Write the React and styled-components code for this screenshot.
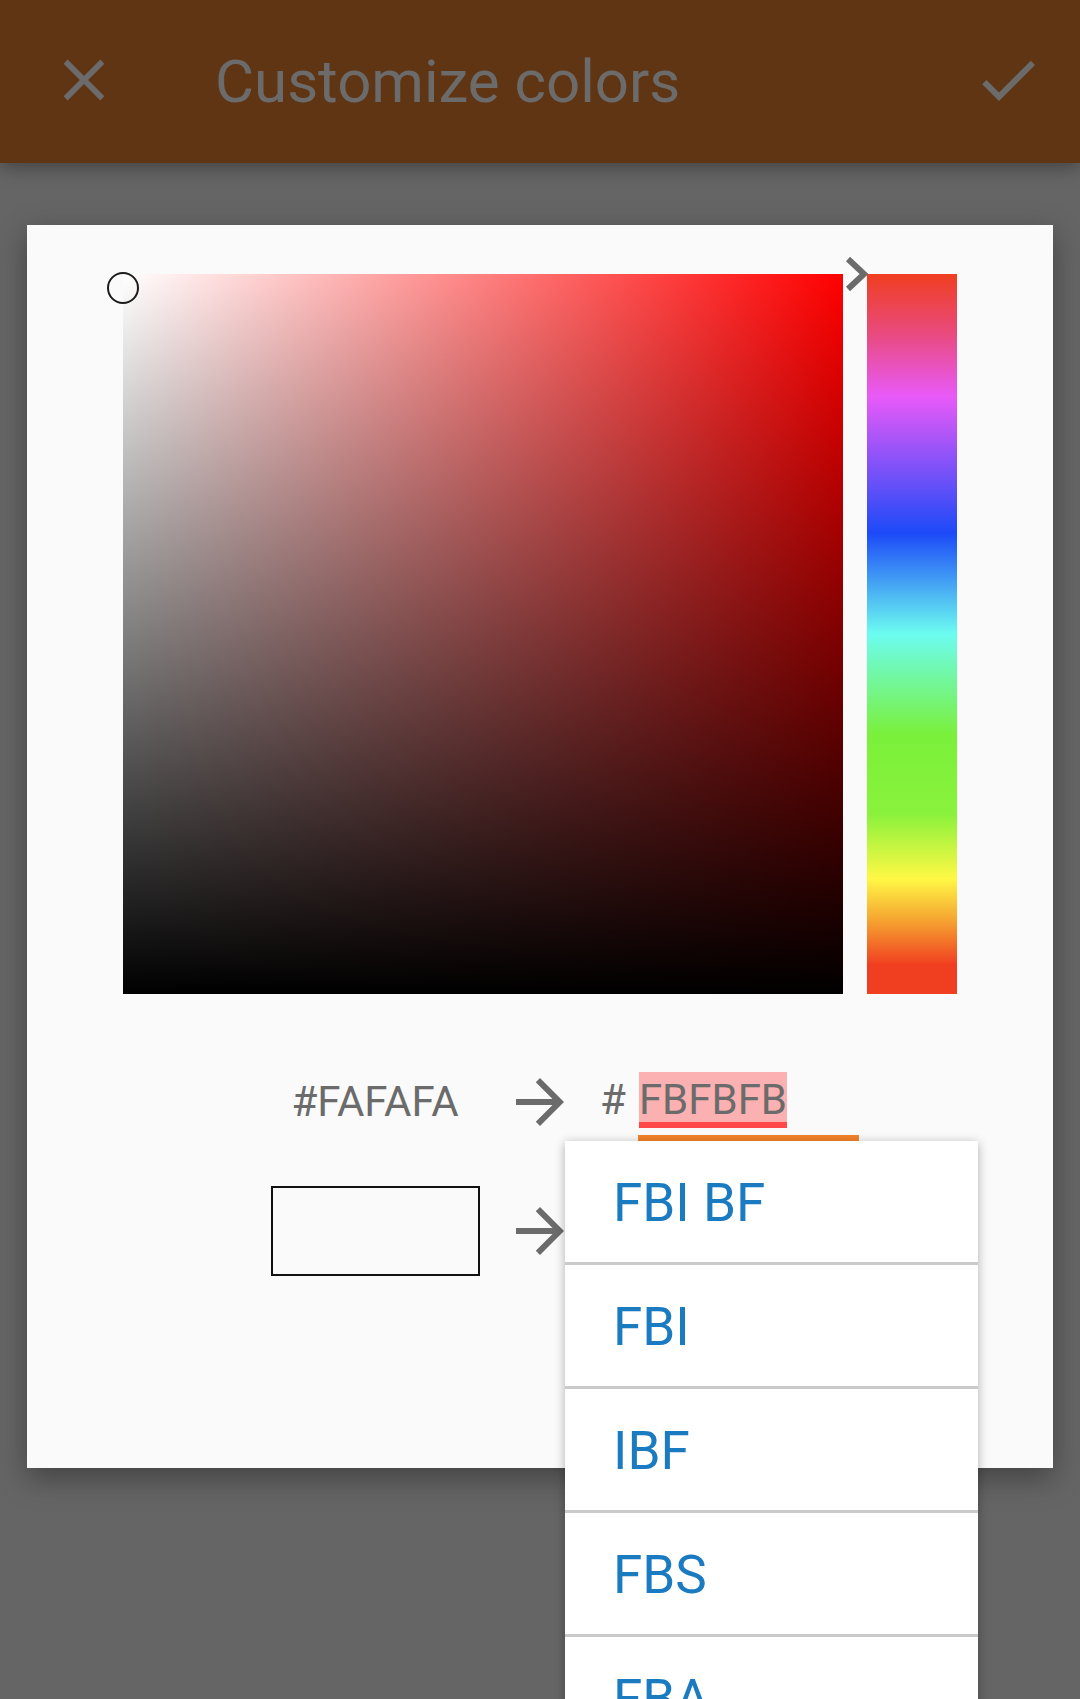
import React from 'react';
import styled, { createGlobalStyle } from 'styled-components';

const GlobalStyle = createGlobalStyle`
  html, body {
    margin: 0;
    padding: 0;
    background: #656565;
  }
  body {
    font-family: Roboto, "Noto Sans", "Liberation Sans", sans-serif;
  }
`;

const Page = styled.div`
  position: relative;
  width: 1080px;
  height: 1699px;
  overflow: hidden;
  background: #656565;
`;

const Toolbar = styled.header`
  position: relative;
  z-index: 2;
  display: flex;
  align-items: center;
  height: 163px;
  box-sizing: border-box;
  padding: 0 36px 3px 49px;
  background: #603514;
  box-shadow: 0 4px 18px rgba(0, 0, 0, 0.35);
`;

const Title = styled.h1`
  flex: 1;
  margin: 3px 0 0 96px;
  font-size: 60px;
  font-weight: 400;
  line-height: 1;
  color: #6b6b6b;
`;

const ToolIcon = styled.svg`
  display: block;
  fill: #6b6b6b;
`;

const Main = styled.main`
  padding: 62px 0 0 27px;
`;

const Dialog = styled.section`
  position: relative;
  width: 1026px;
  height: 1243px;
  box-sizing: border-box;
  padding-top: 49px;
  background: #fafafa;
  box-shadow: 0 10px 28px rgba(0, 0, 0, 0.35);
`;

const PickerRow = styled.div`
  display: flex;
  gap: 24px;
  margin-left: 96px;
`;

const SatSquare = styled.div`
  position: relative;
  width: 720px;
  height: 720px;
  background: linear-gradient(to top, #000, rgba(0, 0, 0, 0)),
    linear-gradient(to right, #fff, #f00);
`;

const Thumb = styled.div`
  position: absolute;
  left: -16px;
  top: -2px;
  width: 32px;
  height: 32px;
  box-sizing: border-box;
  border: 2.5px solid #1c1c1c;
  border-radius: 50%;
`;

const HueBar = styled.div`
  position: relative;
  width: 90px;
  height: 720px;
  background: linear-gradient(
    to bottom,
    #f03e20 0%,
    #e94a7a 8%,
    #e85af8 17%,
    #1d4af8 36%,
    #6cfcf0 50%,
    #7af03a 64%,
    #8af23c 75%,
    #fff845 84%,
    #f5a030 90%,
    #f03e20 96%,
    #f03e20 100%
  );
`;

const HueMarker = styled.svg`
  position: absolute;
  left: -25px;
  top: -20px;
`;

const ValueGrid = styled.div`
  display: grid;
  grid-template-columns: 1fr 72px 1fr;
  column-gap: 24px;
  row-gap: 45px;
  margin-top: 78px;
`;

const OldHex = styled.div`
  justify-self: end;
  width: 210px;
  height: 60px;
  text-align: center;
  font-size: 42px;
  line-height: 60px;
  color: #6b6b6b;
`;

const ArrowCell = styled.div`
  display: flex;
  align-items: center;
  justify-content: center;
  height: ${(p) => p.h}px;
`;

const ArrowIcon = styled.svg`
  flex: none;
  fill: #6b6b6b;
`;

const HexField = styled.div`
  display: flex;
  flex-direction: column;
  align-items: flex-start;
`;

const HexLine = styled.div`
  display: flex;
  align-items: flex-start;
  font-size: 42px;
  line-height: 56px;
  color: #6b6b6b;
`;

const Hash = styled.span`
  margin-right: 13px;
`;

const Selected = styled.span`
  height: 56px;
  box-sizing: border-box;
  background: #fbb1b1;
  border-bottom: 6px solid #ff4848;
  line-height: 56px;
`;

const Underline = styled.div`
  width: 221px;
  height: 6px;
  margin: 7px 0 0 38px;
  background: #f5832a;
`;

const Swatch = styled.div`
  justify-self: end;
  width: 209px;
  height: 90px;
  box-sizing: border-box;
  border: 2.5px solid #111;
  background: #fafafa;
`;

const Suggestions = styled.ul`
  position: absolute;
  left: 538px;
  top: 916px;
  width: 413px;
  margin: 0;
  padding: 0;
  list-style: none;
  background: #fff;
  box-shadow: 0 2px 10px rgba(0, 0, 0, 0.3);
  z-index: 3;
`;

const Suggestion = styled.li`
  height: 124px;
  box-sizing: border-box;
  padding: 4px 0 0 48px;
  border-bottom: 3px solid #cacaca;
  font-size: 53px;
  line-height: 117px;
  color: #1b7bc0;
`;

const Arrow = ({ h }) => (
  <ArrowCell h={h}>
    <ArrowIcon width="72" height="72" viewBox="0 0 24 24">
      <path d="M12 4l-1.41 1.41L16.17 11H4v2h12.17l-5.58 5.59L12 20l8-8z" />
    </ArrowIcon>
  </ArrowCell>
);

const words = ['FBI BF', 'FBI', 'IBF', 'FBS', 'FBA'];

export default function App() {
  return (
    <Page>
      <GlobalStyle />
      <Toolbar>
        <ToolIcon width="70" height="70" viewBox="0 0 24 24">
          <path d="M19 6.41L17.59 5 12 10.59 6.41 5 5 6.41 10.59 12 5 17.59 6.41 19 12 13.41 17.59 19 19 17.59 13.41 12z" />
        </ToolIcon>
        <Title>Customize colors</Title>
        <ToolIcon width="72" height="72" viewBox="0 0 24 24">
          <path d="M9 16.17L4.83 12l-1.42 1.41L9 19 21 7l-1.41-1.41z" />
        </ToolIcon>
      </Toolbar>
      <Main>
        <Dialog>
          <PickerRow>
            <SatSquare>
              <Thumb />
            </SatSquare>
            <HueBar>
              <HueMarker width="30" height="40" viewBox="0 0 30 40">
                <polyline
                  points="6,5 22,20 6,35"
                  fill="none"
                  stroke="#6b6b6b"
                  strokeWidth="6"
                />
              </HueMarker>
            </HueBar>
          </PickerRow>
          <ValueGrid>
            <OldHex>#FAFAFA</OldHex>
            <Arrow h={60} />
            <HexField>
              <HexLine>
                <Hash>#</Hash>
                <Selected>FBFBFB</Selected>
              </HexLine>
              <Underline />
            </HexField>
            <Swatch />
            <Arrow h={90} />
            <div />
          </ValueGrid>
          <Suggestions>
            {words.map((w) => (
              <Suggestion key={w}>{w}</Suggestion>
            ))}
          </Suggestions>
        </Dialog>
      </Main>
    </Page>
  );
}
